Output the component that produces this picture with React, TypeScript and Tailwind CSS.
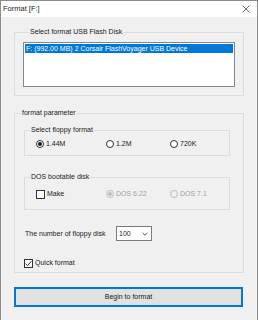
import React from 'react';

const font = { fontFamily: '"Liberation Sans", Arial, sans-serif' };

function Radio({ checked = false, disabled = false, label }: { checked?: boolean, disabled?: boolean, label: string }) {
  return (
    <div className="flex items-center h-[10px]">
      <span className={`w-[8px] h-[8px] rounded-full border flex items-center justify-center ${disabled ? 'border-[#bcbcbc] bg-[#f0f0f0]' : 'border-[#333] bg-white'}`}>
        {checked && <span className={`w-[4px] h-[4px] rounded-full ${disabled ? 'bg-[#bcbcbc]' : 'bg-[#1a1a1a]'}`} />}
      </span>
      <span className={`ml-[2px] ${disabled ? 'text-[#a0a0a0]' : 'text-[#1a1a1a]'}`}>{label}</span>
    </div>
  );
}

function Check({ checked = false, label }: { checked?: boolean, label: string }) {
  return (
    <div className="flex items-center h-[10px]">
      <span className="w-[9px] h-[9px] border border-[#333] bg-white flex items-center justify-center">
        {checked && (
          <svg width="7" height="7" viewBox="0 0 7 7">
            <path d="M0.6 3.6 L2.6 5.6 L6.4 1.2" fill="none" stroke="#1a1a1a" strokeWidth="0.9" />
          </svg>
        )}
      </span>
      <span className="ml-[2px]">{label}</span>
    </div>
  );
}

export default function App() {
  return (
    <div className="w-[258px] h-[320px] bg-[#f0f0f0] border border-b-0 border-[#8c8c8c] text-[7px] leading-[8px] text-[#1a1a1a] overflow-hidden" style={font}>
      {/* Title bar */}
      <div className="h-[16px] bg-white flex items-center justify-between pl-[2px] pr-[7px]">
        <span className="text-[7.5px]">Format [F:]</span>
        <svg width="8" height="8" viewBox="0 0 8 8">
          <path d="M0.5 0.5 L7.5 7.5 M7.5 0.5 L0.5 7.5" stroke="#444" strokeWidth="0.8" />
        </svg>
      </div>

      {/* USB disk group */}
      <fieldset className="ml-[13px] mt-[11px] w-[230px] border border-[#dcdcdc] pt-[6px] pb-[8px] px-[8px]">
        <legend className="ml-[6px] px-[1px] leading-[8px]">Select format USB Flash Disk</legend>
        <div className="h-[45px] border border-[#828790] bg-white p-[1px]">
          <div className="h-[9px] bg-[#0078d7] text-white flex items-center pl-[1px]">
            F: (992.00 MB) 2 Corsair FlashVoyager USB Device
          </div>
        </div>
      </fieldset>

      {/* format parameter group */}
      <fieldset className="ml-[13px] mt-[13px] w-[230px] border border-[#dcdcdc] pb-[4px]">
        <legend className="ml-[6px] px-[1px] leading-[8px]">format parameter</legend>

        <fieldset className="ml-[9px] mt-[9px] w-[206px] border border-[#dcdcdc] pt-[5px] pb-[6px]">
          <legend className="ml-[5px] px-[1px] leading-[8px]">Select floppy format</legend>
          <div className="flex">
            <div className="ml-[11px] w-[70px]"><Radio checked label="1.44M" /></div>
            <div className="w-[64px]"><Radio label="1.2M" /></div>
            <Radio label="720K" />
          </div>
        </fieldset>

        <fieldset className="ml-[9px] mt-[17px] w-[206px] border border-[#dcdcdc] pt-[8px] pb-[10px]">
          <legend className="ml-[5px] px-[1px] leading-[8px]">DOS bootable disk</legend>
          <div className="flex">
            <div className="ml-[11px] w-[70px]"><Check label="Make" /></div>
            <div className="w-[64px]"><Radio checked disabled label="DOS 6.22" /></div>
            <Radio disabled label="DOS 7.1" />
          </div>
        </fieldset>

        <div className="mt-[16px] ml-[10px] flex items-center">
          <span className="w-[91px]">The number of floppy disk</span>
          <div className="w-[36px] h-[15px] border border-[#7a7a7a] bg-white flex items-center justify-between pl-[2px] pr-[3px]">
            <span>100</span>
            <svg width="6" height="4" viewBox="0 0 6 4">
              <path d="M0.5 0.8 L3 3.2 L5.5 0.8" fill="none" stroke="#333" strokeWidth="0.8" />
            </svg>
          </div>
        </div>

        <div className="mt-[17px] ml-[9px]">
          <Check checked label="Quick format" />
        </div>
      </fieldset>

      {/* Begin button */}
      <div className="ml-[13px] mt-[14px] w-[229px] h-[20px] border-2 border-[#0078d7] bg-[#e1e1e1] flex items-center justify-center">
        Begin to format
      </div>
    </div>
  );
}
